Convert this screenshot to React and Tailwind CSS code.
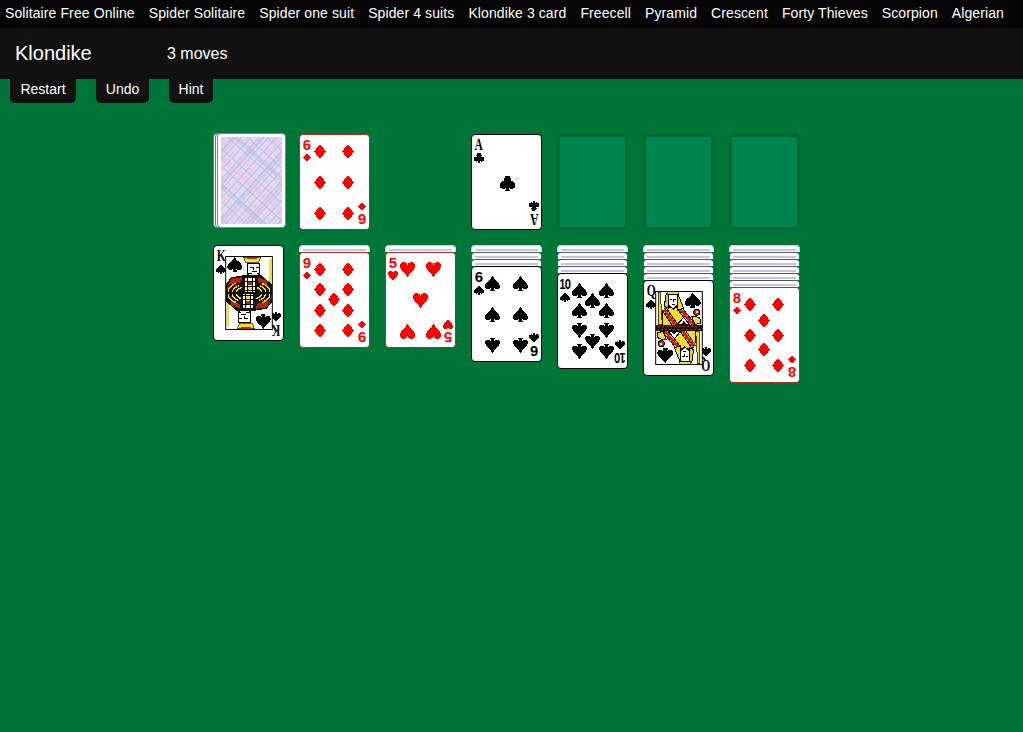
import React from "react";

const games = [
  "Solitaire Free Online",
  "Spider Solitaire",
  "Spider one suit",
  "Spider 4 suits",
  "Klondike 3 card",
  "Freecell",
  "Pyramid",
  "Crescent",
  "Forty Thieves",
  "Scorpion",
  "Algerian",
];

const L = 21;
const M = 35;
const R = 49;

const layouts = {
  A: [[M + 1, 49]],
  5: [[L + 1, 17], [R - 1, 17], [M, 48], [L + 1, 79], [R - 1, 79]],
  6: [[L, 17], [R, 17], [L, 48], [R, 48], [L, 79], [R, 79]],
  8: [[L, 17], [R, 17], [M, 33], [L, 48], [R, 48], [M, 62], [L, 78], [R, 78]],
  9: [[L, 17], [R, 17], [L, 37], [R, 37], [M, 47], [L, 58], [R, 58], [L, 78], [R, 78]],
  10: [[L + 1, 17], [R, 17], [M, 27], [L + 1, 37], [R, 37], [L + 1, 57], [R, 57], [M, 68], [L + 1, 78], [R, 78]],
};

const suitPaths = {
  diamond: <path d="M8 0 L16 8 L8 16 L0 8 Z" />,
  heart: <path d="M8 16 C6 12 0 9 0 4.5 C0 1.5 2 0 4 0 C6 0 7.3 1.2 8 3 C8.7 1.2 10 0 12 0 C14 0 16 1.5 16 4.5 C16 9 10 12 8 16 Z" />,
  spade: <path d="M8 0 C10 4 16 7 16 10.5 C16 13 14 14 12.4 14 C10.9 14 9.7 13.4 9 12.3 C9.1 13.6 9.6 14.8 10.8 16 L5.2 16 C6.4 14.8 6.9 13.6 7 12.3 C6.3 13.4 5.1 14 3.6 14 C2 14 0 13 0 10.5 C0 7 6 4 8 0 Z" />,
  club: <path d="M8 0 A3.9 3.9 0 0 1 11.4 6 A3.9 3.9 0 1 1 9.2 11.6 C9.3 13.2 9.8 14.7 10.8 16 L5.2 16 C6.2 14.7 6.7 13.2 6.8 11.6 A3.9 3.9 0 1 1 4.6 6 A3.9 3.9 0 0 1 8 0 Z" />,
};

const Suit = ({ suit, className, style }) => (
  <svg
    viewBox="0 0 16 16"
    preserveAspectRatio="none"
    shapeRendering="crispEdges"
    fill="currentColor"
    className={className}
    style={style}
  >
    {suitPaths[suit]}
  </svg>
);

const KingHalf = () => (
  <g shapeRendering="crispEdges">
    <path d="M9.5 1 C11 5 17 7 17 11 C17 14.5 13 14.5 10.8 12.5 L12 16 L7 16 L8.2 12.5 C6 14.5 2 14.5 2 11 C2 7 8 5 9.5 1 Z" fill="#000" />
    <path d="M18 1 L35 1 L33 6 L20 6 Z" fill="#f5e020" stroke="#000" strokeWidth="0.6" />
    <rect x="22" y="1" width="9" height="2" fill="#c02010" />
    <path d="M22 7 L34 7 L34 18 L30 21 L26 21 L22 18 Z" fill="#fff" stroke="#000" />
    <path d="M24 11 H27 M30 11 H33 M26 15 H31 M28 11 V14 M23 17 H26 M31 17 H33" stroke="#000" fill="none" />
    <rect x="43" y="3" width="2.5" height="26" fill="#f0e030" />
    <path d="M0.5 36.5 L0.5 28 L6 21 L18 19 L36 19 L46 28 L46 36.5 Z" fill="#111" />
    <path d="M2 28 L7 22 L17 21 L15 26 L8 28 Z" fill="#b8200f" />
    <path d="M32 21 L42 25 L41 29 L33 26 Z" fill="#b8200f" />
    <path d="M3 36 C3 31 6 29 11 27 M7 36 C7 33 9 31 14 29 M11 36 C11 34 13 32 17 31" stroke="#f5e020" strokeWidth="1.4" fill="none" />
    <path d="M44 36 C44 31 41 29 36 27 M40 36 C40 33 38 31 34 29 M36 36 C36 34 34 32 31 31" stroke="#f5e020" strokeWidth="1.4" fill="none" />
    <path d="M1 33 L5 27 M13 30 L9 28" stroke="#b8200f" strokeWidth="1" fill="none" />
    <rect x="19" y="21" width="11" height="15.5" fill="#fff" stroke="#000" />
    <path d="M19 25 H30 M19 30 H30 M19 34 H30 M22 21 V36 M27 21 V36" stroke="#000" />
    <rect x="23" y="26" width="3" height="3" fill="#c02010" />
    <rect x="23" y="31" width="3" height="3" fill="#f5e020" />
  </g>
);

const QueenHalf = () => (
  <g shapeRendering="crispEdges">
    <path d="M37 2 C39 6 45 8 45 12 C45 15.5 41 15.5 38.5 13.5 L40 17 L34 17 L35.5 13.5 C33 15.5 29 15.5 29 12 C29 8 35 6 37 2 Z" fill="#000" />
    <path d="M3 1 L5 1 L7 33 L3 33 Z" fill="#f5e020" stroke="#000" strokeWidth="0.7" />
    <path d="M10 16 L24 16 L39 34 L7 34 L7 23 Z" fill="#f5e020" stroke="#000" />
    <path d="M9 18 L20 34" stroke="#d82010" strokeWidth="3" fill="none" />
    <path d="M11 17 L23 34 M7 19 L17 34" stroke="#000" fill="none" />
    <path d="M24 17 L37 33" stroke="#d82010" strokeWidth="3" fill="none" />
    <path d="M26 16 L39 32 M22 18 L34 34" stroke="#000" fill="none" />
    <path d="M22 33 L28 26 L34 33 Z" fill="#fff" stroke="#000" />
    <path d="M26 33 L28 30 L31 33 Z" fill="#000" />
    <path d="M11 2 L9 15 L13 17 L14 3 Z" fill="#e8c820" stroke="#000" />
    <path d="M22 2 L28 17 L22 19 Z" fill="#f5e020" stroke="#000" />
    <path d="M13 3 L22 3 L22 14 L18 18 L13 14 Z" fill="#fff" stroke="#000" />
    <path d="M15 8 H17 M19 8 H21 M17 13 H20 M18 8 V11" stroke="#000" fill="none" />
    <rect x="12" y="0" width="11" height="3" fill="#f5e020" stroke="#000" strokeWidth="0.6" />
    <circle cx="41" cy="21" r="3" fill="#d82010" stroke="#000" />
    <rect x="40" y="20" width="2" height="2" fill="#fff" />
    <path d="M36 25 L44 26 L45 32 L39 33 Z" fill="#f5e020" stroke="#000" />
    <rect x="1" y="33.5" width="45" height="3" fill="#111" />
    <path d="M3 35 H44" stroke="#d82010" strokeDasharray="2 2" />
  </g>
);

const CourtArt = ({ queen }) => {
  const Half = queen ? QueenHalf : KingHalf;
  return (
    <svg
      viewBox="0 0 47 73"
      className="absolute left-[11px] top-[10px] h-[74px] w-[48px]"
    >
      <rect x="0.5" y="0.5" width="46" height="72" fill="#fff" />
      <Half />
      <g transform="rotate(180 23.5 36.5)">
        <Half />
      </g>
      <rect x="0.5" y="0.5" width="46" height="72" fill="none" stroke="#000" />
    </svg>
  );
};

const Index = ({ rank, suit, flipped }) => {
  const serif = rank === "K" || rank === "Q" || rank === "A";
  return (
    <div
      className={`absolute flex w-[10px] flex-col items-center ${
        flipped ? "bottom-[3px] right-[2px] rotate-180" : "left-[2px] top-[3px]"
      }`}
    >
      {rank === "10" ? (
        <span className="scale-x-[0.8] text-[14px] font-bold leading-[14px] tracking-[-1px] [font-family:'Liberation_Sans',sans-serif]">
          10
        </span>
      ) : serif ? (
        <span className="scale-x-[0.72] text-[16px] font-bold leading-[14px] [font-family:'Liberation_Serif',serif]">
          {rank}
        </span>
      ) : (
        <span className="text-[15px] font-bold leading-[14px] [font-family:'Liberation_Sans',sans-serif]">
          {rank}
        </span>
      )}
      <Suit
        suit={suit}
        className={
          suit === "diamond"
            ? "mt-[1px] h-[9px] w-[8px]"
            : "mt-[1px] h-[10px] w-[10px]"
        }
      />
    </div>
  );
};

const Card = ({ rank, suit }) => {
  const red = suit === "diamond" || suit === "heart";
  const court = rank === "K" || rank === "Q";
  const pipW = suit === "diamond" ? 12 : 15;
  return (
    <div
      className={`relative h-[96px] w-[71px] rounded-[4px] border bg-white ${
        red ? "border-[#b5281c] text-[#ff0000]" : "border-black text-black"
      }`}
    >
      <Index rank={rank} suit={suit} />
      <Index rank={rank} suit={suit} flipped />
      {court && <CourtArt queen={rank === "Q"} />}
      {!court &&
        layouts[rank].map(([x, y], i) => (
          <Suit
            key={i}
            suit={suit}
            className={`absolute h-[15px] ${y > 50 ? "rotate-180" : ""}`}
            style={{ width: pipW, left: x - pipW / 2 - 1, top: y - 8.5 }}
          />
        ))}
    </div>
  );
};

const BackPattern = ({ id }) => (
  <svg className="h-full w-full" preserveAspectRatio="none">
    <defs>
      <pattern
        id={id}
        width="13"
        height="13"
        patternUnits="userSpaceOnUse"
        patternTransform="rotate(42)"
      >
        <rect width="13" height="13" fill="#e2d8f2" />
        <rect x="2" width="1" height="13" fill="#c4bce4" />
        <rect x="6" width="1" height="13" fill="#ecc6e4" />
        <rect x="9" width="1" height="13" fill="#b4c4e4" />
        <rect y="3" width="13" height="1" fill="#e4bfe0" fillOpacity="0.7" />
        <rect y="8" width="13" height="1" fill="#a9bfe0" fillOpacity="0.7" />
      </pattern>
      <pattern
        id={`${id}-wide`}
        width="46"
        height="46"
        patternUnits="userSpaceOnUse"
        patternTransform="rotate(42)"
      >
        <rect x="8" width="5" height="46" fill="#9fc0e0" fillOpacity="0.3" />
        <rect x="30" width="3" height="46" fill="#b0a8dc" fillOpacity="0.3" />
        <rect y="12" width="46" height="4" fill="#e8b8dc" fillOpacity="0.3" />
        <rect y="34" width="46" height="5" fill="#98bcdc" fillOpacity="0.3" />
      </pattern>
    </defs>
    <rect width="100%" height="100%" fill={`url(#${id})`} />
    <rect width="100%" height="100%" fill={`url(#${id}-wide)`} />
  </svg>
);

const Stock = () => (
  <div className="relative -mt-px h-[96px] w-[73px] pl-[4px]">
    <div className="absolute left-0 top-0 h-[95px] w-[60px] rounded-[4px] border border-[#5f7a9c] bg-white" />
    <div className="absolute left-[2px] top-0 h-[95px] w-[60px] rounded-[4px] border border-[#5f7a9c] bg-white" />
    <div className="relative h-[95px] w-[69px] rounded-[4px] border border-[#6f8aa6] bg-white p-[3px]">
      <BackPattern id="back" />
    </div>
  </div>
);

const Sliver = ({ first }) => (
  <div
    className={`h-[7px] w-[71px] rounded-t-[4px] border-x border-t bg-white ${
      first ? "border-[#c8d2d2]" : "border-[#4a5a70]"
    }`}
  >
    <div className="mx-[3px] mt-[3px] h-[2px] bg-[#c7c3e6]" />
  </div>
);

const Empty = () => (
  <div className="h-[96px] w-[71px] rounded-[4px] border-[3px] border-[#006634] bg-[#008550]" />
);

const tableau = [
  { down: 0, rank: "K", suit: "spade" },
  { down: 1, rank: "9", suit: "diamond" },
  { down: 1, rank: "5", suit: "heart" },
  { down: 3, rank: "6", suit: "spade" },
  { down: 4, rank: "10", suit: "spade" },
  { down: 5, rank: "Q", suit: "spade" },
  { down: 6, rank: "8", suit: "diamond" },
];

const App = () => {
  return (
    <div className="min-h-screen bg-[#007538] text-white [font-family:'Liberation_Sans',Arial,sans-serif]">
      <nav className="flex h-[28px] items-center gap-[14px] bg-[#050505] pb-[1px] pl-[5px] text-[14px] tracking-[0.1px] whitespace-nowrap">
        {games.map((g) => (
          <a key={g} href="#">
            {g}
          </a>
        ))}
      </nav>
      <header className="flex h-[51px] items-center bg-[#111111] pb-[1px] pl-[15px]">
        <h1 className="w-[152px] text-[20px]">Klondike</h1>
        <span className="mt-[1px] text-[16px]">3 moves</span>
      </header>
      <div className="ml-[10px] flex gap-[20px] text-[14px]">
        <button className="h-[24px] w-[66px] rounded-b-[5px] bg-[#111111] pb-[3px] text-white">
          Restart
        </button>
        <button className="h-[24px] w-[53px] rounded-b-[5px] bg-[#111111] pb-[3px] text-white">
          Undo
        </button>
        <button className="h-[24px] w-[44px] rounded-b-[5px] bg-[#111111] pb-[3px] text-white">
          Hint
        </button>
      </div>
      <div className="ml-[213px] mt-[31px] w-[587px]">
        <div className="grid grid-cols-[repeat(7,71px)] gap-x-[15px]">
          <Stock />
          <Card rank="6" suit="diamond" />
          <div />
          <Card rank="A" suit="club" />
          <Empty />
          <Empty />
          <Empty />
        </div>
        <div className="mt-[15px] grid grid-cols-[repeat(7,71px)] items-start gap-x-[15px]">
          {tableau.map((col, i) => (
            <div key={i} className="flex flex-col">
              {Array.from({ length: col.down }).map((_, j) => (
                <Sliver key={j} first={j === 0} />
              ))}
              <Card rank={col.rank} suit={col.suit} />
            </div>
          ))}
        </div>
      </div>
    </div>
  );
};

export default App;
